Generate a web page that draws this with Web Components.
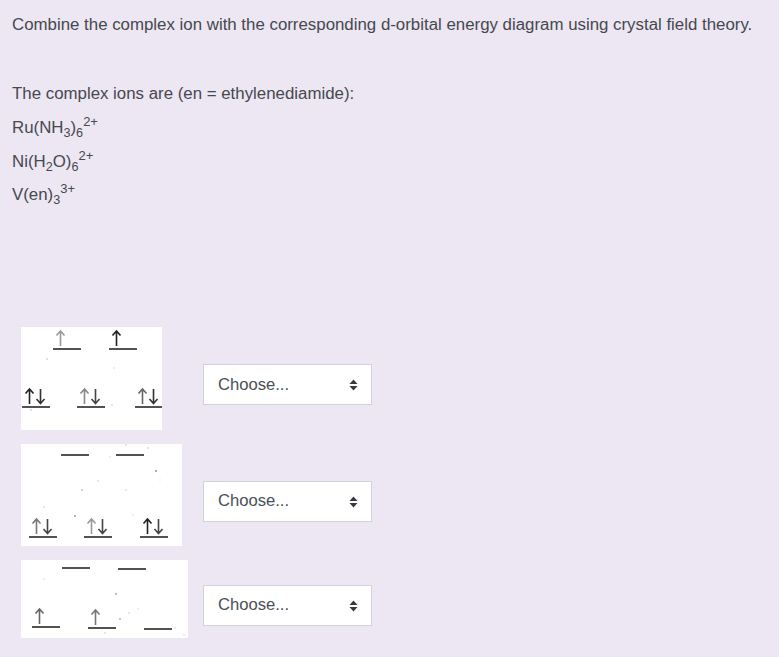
<!DOCTYPE html>
<html lang="en">
<head>
<meta charset="utf-8">
<title>Crystal field theory question</title>
<style>
html,body{margin:0;background:#ede6f3}
body{font:16.85px/24px "Liberation Sans",Arial,sans-serif;color:#45494e}
</style>
</head>
<body>
<template id="t-question">
<style>
:host{display:block;padding:13px 12px 0;box-sizing:border-box;width:779px;height:657px;overflow:hidden}
.txt{display:flex;flex-direction:column}
.rows{display:flex;flex-direction:column;gap:14px;padding:0 0 0 9px;margin-top:110.2px}
</style>
<div class="txt"><slot name="text"></slot></div>
<div class="rows"><slot name="rows"></slot></div>
</template>

<template id="t-line">
<style>
:host{display:block;height:24px;margin-bottom:10px;white-space:nowrap}
:host([gap]){margin-bottom:45px}
</style><slot></slot>
</template>

<template id="t-ion">
<style>
:host{display:block;height:24px;margin-bottom:9.6px;white-space:nowrap}
.s{font-size:12.6px;line-height:0}
sub.s{vertical-align:-4px}
sup.s{font-size:13px;vertical-align:7.5px}
</style><span id="f"></span>
</template>

<template id="t-row">
<style>
:host{display:flex;align-items:center;gap:var(--g,15px)}
</style><slot></slot>
</template>

<template id="t-select">
<style>
:host{display:block;position:relative;width:169px;height:41px;margin-top:var(--m,12px);flex:none}
select{appearance:none;-webkit-appearance:none;display:block;width:100%;height:100%;box-sizing:border-box;margin:0;border:1px solid #ced4da;border-radius:0;background:#fff;color:#495057;font:16.6px/24px "Liberation Sans",Arial,sans-serif;padding:var(--p,2px) 30px 0 14px;outline:0}
svg{position:absolute;right:14px;top:15px;pointer-events:none}
</style>
<select aria-label="Answer"><option>Choose...</option></select>
<svg width="9" height="12" viewBox="0 0 9 12"><path d="M4.5 0.5 8.5 5H.5z" fill="#343a40"/><path d="M4.5 11.5 .5 7H8.5z" fill="#343a40"/></svg>
</template>

<template id="t-diagram">
<style>
:host{display:block;flex:none;background:#fff;overflow:hidden}
svg{display:block;width:100%;height:100%}
</style>
<svg xmlns="http://www.w3.org/2000/svg"><defs><filter id="b" x="-5%" y="-5%" width="110%" height="110%"><feGaussianBlur stdDeviation="0.4"/></filter></defs><g filter="url(#b)" fill="none" stroke="#222" stroke-width="1.6"></g></svg>
</template>

<script>
function tpl(id){return document.getElementById(id).content.cloneNode(true)}
function def(name,id){customElements.define(name,class extends HTMLElement{
  constructor(){super();this.attachShadow({mode:'open'}).appendChild(tpl(id))}
})}
def('cf-question','t-question');
def('cf-line','t-line');
def('cf-row','t-row');
def('cf-select','t-select');
customElements.define('cf-ion',class extends HTMLElement{
  constructor(){super();this.attachShadow({mode:'open'}).appendChild(tpl('t-ion'))}
  connectedCallback(){
    const box=this.shadowRoot.getElementById('f');box.textContent='';
    for(const p of (this.getAttribute('f')||'').split(/(_\{[^}]*\}|\^\{[^}]*\})/)){
      if(!p)continue;
      if(p[0]==='_'||p[0]==='^'){const e=document.createElement(p[0]==='_'?'sub':'sup');e.className='s';e.textContent=p.slice(2,-1);box.appendChild(e)}
      else box.appendChild(document.createTextNode(p));
    }
  }
});
const NS='http://www.w3.org/2000/svg';
customElements.define('cf-diagram',class extends HTMLElement{
  constructor(){super();this.attachShadow({mode:'open'}).appendChild(tpl('t-diagram'))}
  connectedCallback(){
    const w=+this.getAttribute('w'),h=+this.getAttribute('h');
    this.style.width=w+'px';this.style.height=h+'px';
    const svg=this.shadowRoot.querySelector('svg');svg.setAttribute('viewBox',`0 0 ${w} ${h}`);
    const g=svg.querySelector('g');
    const add=(d,c,sw)=>{const p=document.createElementNS(NS,'path');p.setAttribute('d',d);if(c)p.setAttribute('stroke',c);if(sw)p.setAttribute('stroke-width',sw);g.appendChild(p)};
    for(const l of this.getAttribute('levels').split(' ')){
      const [x,y,up,down]=l.split(',');const X=+x,Y=+y;
      add(`M${X} ${Y}h28`,'#333','1.7');
      if(up){const ax=X+7.5;add(`M${ax} ${Y-3}V${Y-18}M${ax-4} ${Y-13.5}L${ax} ${Y-18}L${ax+4} ${Y-13.5}`,'#'+up);}
      if(down){const ax=X+18.5;add(`M${ax} ${Y-18}V${Y-3.5}M${ax-4} ${Y-8}L${ax} ${Y-3.5}L${ax+4} ${Y-8}`,'#'+down);}
    }
    for(const s of (this.getAttribute('specks')||'').split(' ')){
      if(!s)continue;const [x,y,c]=s.split(',');
      const r=document.createElementNS(NS,'circle');r.setAttribute('cx',x);r.setAttribute('cy',y);r.setAttribute('r','.7');r.setAttribute('fill','#'+c);r.setAttribute('stroke','none');g.appendChild(r);
    }
  }
});
</script>

<cf-question>
  <cf-line slot="text" gap>Combine the complex ion with the corresponding d-orbital energy diagram using crystal field theory.</cf-line>
  <cf-line slot="text">The complex ions are (en = ethylenediamide):</cf-line>
  <cf-ion slot="text" f="Ru(NH_{3})_{6}^{2+}"></cf-ion>
  <cf-ion slot="text" f="Ni(H_{2}O)_{6}^{2+}"></cf-ion>
  <cf-ion slot="text" f="V(en)_{3}^{3+}"></cf-ion>

  <cf-row slot="rows" style="--g:41px">
    <cf-diagram w="141" h="103" levels="32,22,999, 88,22,222, 1,80,222,333 56,80,888,444 114,80,666,333" specks="26,32,aaa 93,41,ccc 91,78,bbb 10,83,aaa"></cf-diagram>
    <cf-select></cf-select>
  </cf-row>
  <cf-row slot="rows" style="--g:21px;--m:13px;--p:0px">
    <cf-diagram w="161" h="102" levels="40,11,,  95,11,, 8,93,777,444 63,93,999,444 119,93,222,444" specks="105,1,bbb 127,4,bbb 89,13,ccc 135,27,222 139,36,ddd 77,37,bbb 61,46,888 105,46,bbb 23,63,bbb 54,72,333 112,71,ddd"></cf-diagram>
    <cf-select></cf-select>
  </cf-row>
  <cf-row slot="rows" style="--g:15px;--m:13px;--p:0px">
    <cf-diagram w="167" h="78" levels="41,8,, 97,9,, 11,67,666, 67,68,777, 123,69,," specks="23,19,ccc 95,34,555 117,49,ccc 108,53,bbb 99,59,666 84,73,bbb 163,75,ccc 154,68,ccc"></cf-diagram>
    <cf-select></cf-select>
  </cf-row>
</cf-question>
</body>
</html>
